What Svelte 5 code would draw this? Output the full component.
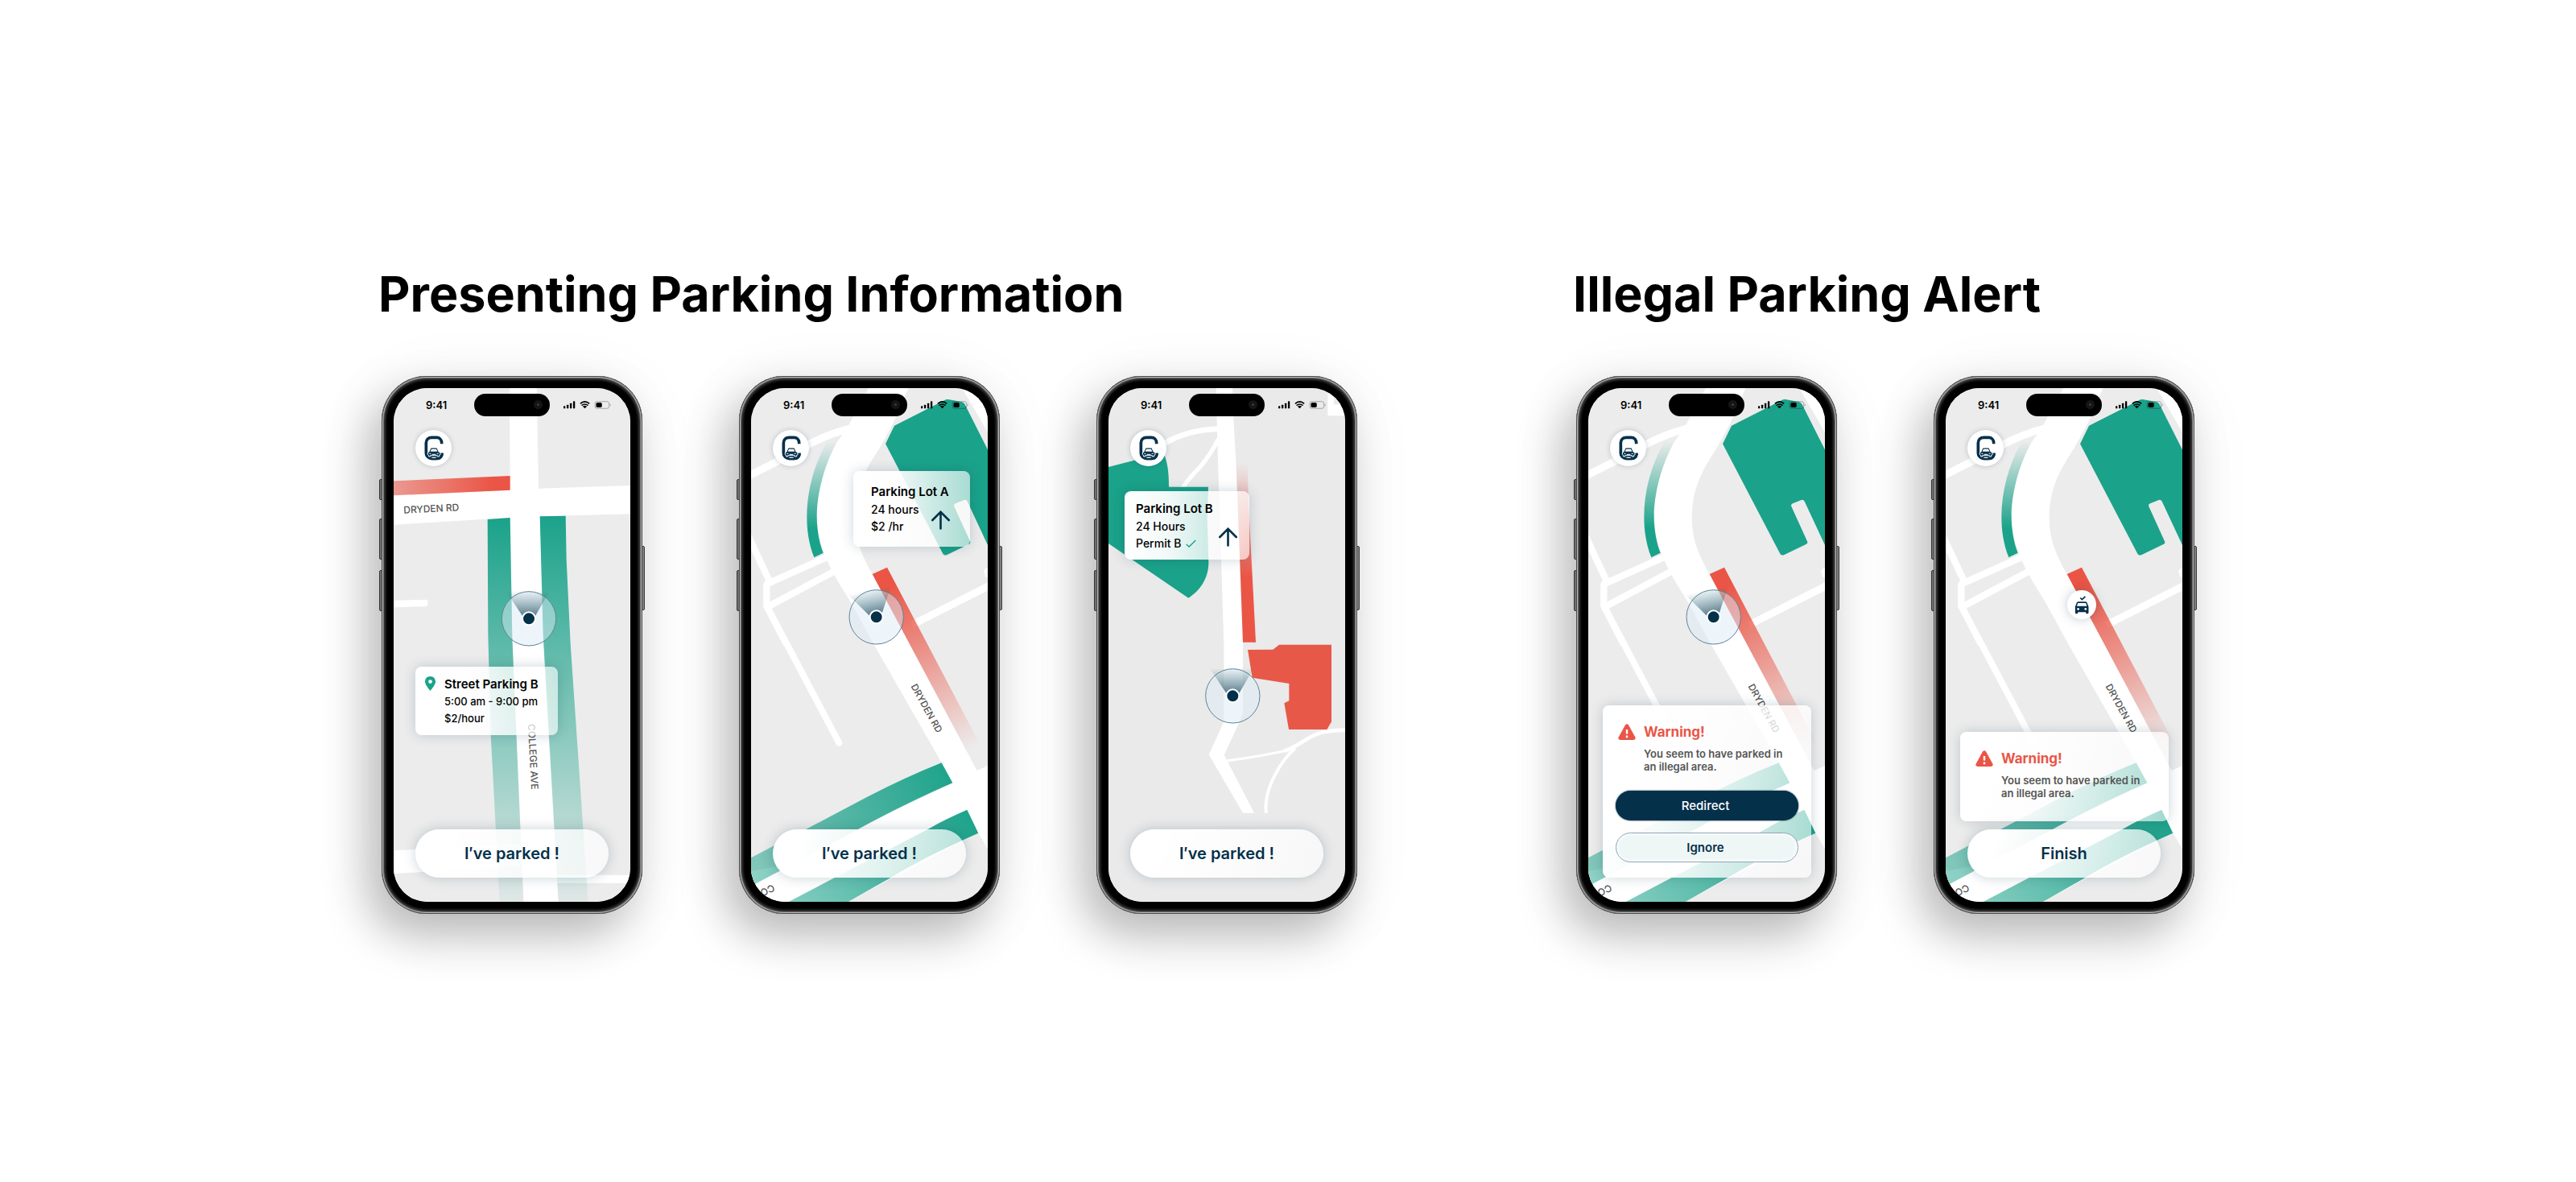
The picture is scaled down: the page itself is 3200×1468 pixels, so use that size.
<script>
  const groups = [
    {
      title: 'Presenting Parking Information',
      phones: [
        {
          map: 'college',
          marker: { x: 504, y: 859, turn: 0 },
          card: {
            kind: 'street',
            title: 'Street Parking B',
            lines: ['5:00 am - 9:00 pm', '$2/hour'],
            icon: 'pin'
          },
          action: 'I′ve parked !'
        },
        {
          map: 'dryden',
          marker: { x: 467, y: 853, turn: -12 },
          card: {
            kind: 'lot-a',
            title: 'Parking Lot A',
            lines: ['24 hours', '$2 /hr'],
            icon: 'arrow'
          },
          action: 'I′ve parked !'
        },
        {
          map: 'lot',
          marker: { x: 463, y: 1147, turn: 0 },
          card: {
            kind: 'lot-b',
            title: 'Parking Lot B',
            lines: ['24 Hours', 'Permit B'],
            icon: 'arrow',
            check: true
          },
          action: 'I′ve parked !'
        }
      ]
    },
    {
      title: 'Illegal Parking Alert',
      phones: [
        { map: 'dryden', marker: { x: 467, y: 853, turn: -12 }, warning: 'choices' },
        { map: 'dryden', parked: true, warning: 'note', action: 'Finish' }
      ]
    }
  ];
</script>

{#snippet logo()}
  <button class="logo" aria-label="Home">
    <svg viewBox="0 0 135 135" aria-hidden="true">
      <path
        d="M98 52V48C98 36 90 28 79 28H61C49 28 40 36 40 48V86C40 98 49 106 61 106H79C90 106 99 98 99 88V86"
        fill="none" stroke="#04304a" stroke-width="11" />
      <path d="M44 86H104V92Q102 110 82 112H60Q46 108 44 94Z" fill="#04304a" />
      <path
        d="M46 92V84L51 81L56 69Q57 66 60 66H78Q81 66 82 69L87 81L93 84V92L89 94V99H82V95H56V99H50V95Z"
        fill="#04304a" stroke="#fff" stroke-width="3" />
      <path d="M56 80L60 71H78L82 80Z" fill="#fff" />
      <path d="M52 88H58M80 88H86M62 91H76" stroke="#fff" stroke-width="3" />
      <path d="M58 101H80Q77 105 69 105Q61 105 58 101Z" fill="#fff" />
    </svg>
  </button>
{/snippet}

{#snippet statusBar()}
  <header class="status">
    <time>9:41</time>
    <span class="island"><i></i></span>
    <svg class="signals" viewBox="0 0 178 30" aria-hidden="true">
      <g fill="#000">
        <rect x="0" y="19" width="7" height="9" rx="2" />
        <rect x="12" y="14" width="7" height="14" rx="2" />
        <rect x="24" y="8" width="7" height="20" rx="2" />
        <rect x="36" y="1" width="7" height="27" rx="2" />
        <path d="M80 28L72 20Q80 14 88 20Z" />
      </g>
      <g fill="none" stroke="#000" stroke-width="5">
        <path d="M63 10Q80 -5 97 10" />
        <path d="M68 17Q80 7 92 17" />
      </g>
      <rect x="118" y="2" width="53" height="26" rx="8" fill="none" stroke="#000" stroke-opacity=".3" stroke-width="3" />
      <rect x="122" y="6" width="22" height="18" rx="5" fill="#000" />
      <path d="M174 10Q180 15 174 20Z" fill="#000" fill-opacity=".35" />
    </svg>
  </header>
{/snippet}

{#snippet position(marker)}
  <g transform="translate({marker.x} {marker.y})">
    <circle r="101" fill="#dcecf7" fill-opacity=".5" stroke="#5f8496" stroke-width="3" />
    <path d="M-24 -10L-86 -104H78L24 -10Z" fill="url(#cone)" transform="rotate({marker.turn})" />
    <circle r="24" fill="#04304a" stroke="#fff" stroke-width="6" />
  </g>
{/snippet}

{#snippet collegeMap()}
  <rect width="882" height="1914" fill="#ececec" />
  <path d="M0 1723L470 1697L475 1782L0 1809ZM590 1814H882V1844H600Z" fill="#fff" />
  <path d="M0 791L120 788Q127 788 127 795V808Q127 814 120 814L0 817Z" fill="#fff" />
  <path d="M432 0H533L540 374L882 363V469L545 478L560 923L614 1914H484L442 930L434 483L0 509V400L434 380Z" fill="#fff" />
  <path d="M0 346L434 327V380L0 400Z" fill="url(#red-west)" />
  <path d="M350 489L434 483L442 930L484 1914H395L362 1293L352 923Z" fill="url(#green-south)" />
  <path d="M545 478L641 476L644 640L659 953L725 1914H614L557 923Z" fill="url(#green-south)" />
  <text class="road" transform="translate(141 462) rotate(-3)">DRYDEN RD</text>
  <text class="road" transform="translate(507 1374) rotate(87)">COLLEGE AVE</text>
{/snippet}

{#snippet drydenMap()}
  <rect width="882" height="1914" fill="#ececec" />
  <g fill="none" stroke="#fff" stroke-width="25">
    <path d="M-10 328L90 277L215 210Q290 170 370 150" stroke-width="28" />
    <path d="M-10 552L66 714" />
    <path d="M300 622L58 730V812L132 955" stroke-linejoin="bevel" />
    <path d="M60 816L330 672" />
    <path d="M60 815L328 1322" stroke-linecap="round" stroke-width="24" />
    <path d="M600 882L900 730" stroke-width="27" />
  </g>
  <path d="M786 0H862L882 60V164Z" fill="#fff" />
  <path d="M882 668L870 676L868 684L874 704L882 706Z" fill="#fff" />
  <path
    d="M438 0H586L530 130L480 222C420 312 386 380 386 485C386 560 410 620 452 693L842 1425L882 1407V1716L847 1658L787 1686L362 1914H20L0 1880V1800L105 1780L751 1471L710 1396L455 950L370 795C325 720 245 610 245 475C245 400 270 290 318 205L360 145Z"
    fill="#fff" />
  <path d="M282 203Q318 190 320 203C270 290 245 400 245 475C245 530 255 580 269 614L235 631C215 580 208 530 208 480C208 390 232 290 282 203Z" fill="url(#green-north)" />
  <path
    d="M534 140L720 46Q729 40 739 43L786 52Q793 53 797 61L900 265V622L882 585L806 422Q802 415 794 417L762 430Q754 434 757 441L817 573Q818 578 813 581L729 622Q720 625 715 617L501 208Z"
    fill="#1ba28a" />
  <path d="M452 693L507 668L870 1360L820 1384Z" fill="url(#red-south)" />
  <path d="M710 1396Q570 1452 430 1525L210 1641L83 1706L-6 1753V1862L20 1845L105 1800L400 1643Q570 1550 751 1471Z" fill="url(#green-west)" />
  <path d="M805 1571Q720 1608 660 1643L310 1825L140 1914H362L522 1823Q650 1745 847 1658Z" fill="url(#green-west)" />
  <text class="road small" transform="translate(654 1193) rotate(61)" dy="12">DRYDEN RD</text>
  <text class="road start" transform="translate(80 1848) rotate(155)">CO</text>
{/snippet}

{#snippet lotMap()}
  <rect width="882" height="1914" fill="#eaeaea" />
  <path d="M817 0H882V103H817Z" fill="#fff" />
  <path d="M839 0H882V61H839Z" fill="#eaeaea" />
  <path d="M401 0H462L466 113L474 253L501 953V1210L490 1240L431 1367L543 1583H501L374 1366L430 1243V953L407 240Z" fill="#fff" />
  <g fill="none" stroke="#fff">
    <path d="M205 208Q290 156 415 151" stroke-width="20" />
    <path d="M276 372Q300 335 345 290Q378 250 410 190" stroke-width="16" />
    <path d="M438 1389Q580 1370 680 1346" stroke-width="9" />
    <path d="M655 1352C710 1335 740 1296 800 1282Q840 1274 882 1274" stroke-width="14" />
    <path d="M696 1342C640 1390 576 1500 588 1583" stroke-width="12" />
  </g>
  <path d="M0 294L96 269L205 240C218 270 226 310 225 368H372L368 480L373 650C373 710 340 755 298 782L0 579Z" fill="#1ba28a" />
  <path d="M475 250H517L522 430L549 947H501Z" fill="url(#red-north)" />
  <path d="M519 975L613 974L636 956H831V1243L814 1272H672L655 1174L673 1165V1101L536 1079Z" fill="#e85848" />
{/snippet}

{#snippet warningCopy()}
  <div class="alert-head">
    <svg class="triangle" viewBox="0 0 64 58" aria-hidden="true">
      <path d="M26 4Q32 -3 38 4L62 48Q66 57 56 58H8Q-2 57 2 48Z" fill="#ea5546" />
      <path d="M32 20V36M32 42V50" stroke="#fff" stroke-width="7" />
    </svg>
    <h2>Warning!</h2>
  </div>
  <p>You seem to have parked in<br />an illegal area.</p>
{/snippet}

<svg class="shared" aria-hidden="true">
  <defs>
    <linearGradient id="red-west" x1="0" x2="1" y1="0" y2="0">
      <stop offset="0" stop-color="#ea5546" stop-opacity=".55" />
      <stop offset=".85" stop-color="#ea5546" />
    </linearGradient>
    <linearGradient id="green-south" x1="0" x2="0" y1="0" y2="1">
      <stop offset="0" stop-color="#1ba28a" />
      <stop offset="1" stop-color="#1ba28a" stop-opacity=".06" />
    </linearGradient>
    <linearGradient id="green-north" x1="0" x2="0" y1="0" y2="1">
      <stop offset="0" stop-color="#1ba28a" stop-opacity="0" />
      <stop offset=".75" stop-color="#1ba28a" />
    </linearGradient>
    <linearGradient id="green-west" gradientUnits="userSpaceOnUse" x1="0" y1="1860" x2="800" y2="1500">
      <stop offset="0" stop-color="#1ba28a" stop-opacity=".48" />
      <stop offset="1" stop-color="#1ba28a" />
    </linearGradient>
    <linearGradient id="red-south" gradientUnits="userSpaceOnUse" x1="500" y1="740" x2="830" y2="1340">
      <stop offset="0" stop-color="#ea5546" />
      <stop offset="1" stop-color="#ea5546" stop-opacity="0" />
    </linearGradient>
    <linearGradient id="red-north" x1="0" x2="0" y1="0" y2="1">
      <stop offset=".04" stop-color="#ea5546" stop-opacity="0" />
      <stop offset=".65" stop-color="#ea5546" />
    </linearGradient>
    <linearGradient id="cone" x1="0" x2="0" y1="1" y2="0">
      <stop offset="0" stop-color="#04304a" stop-opacity=".62" />
      <stop offset="1" stop-color="#1b5a58" stop-opacity="0" />
    </linearGradient>
  </defs>
</svg>

<main>
  {#each groups as group}
    <section>
      <h1>{group.title}</h1>
      <div class="phones">
        {#each group.phones as phone}
          <article class="phone">
            <span class="key silent"></span>
            <span class="key up"></span>
            <span class="key down"></span>
            <span class="key power"></span>
            <div class="screen">
              <svg class="map" viewBox="0 0 882 1914" preserveAspectRatio="none" aria-hidden="true">
                {#if phone.map === 'college'}
                  {@render collegeMap()}
                {:else if phone.map === 'dryden'}
                  {@render drydenMap()}
                {:else}
                  {@render lotMap()}
                {/if}
                {#if phone.marker}
                  {@render position(phone.marker)}
                {/if}
              </svg>

              {@render statusBar()}
              {@render logo()}

              {#if phone.parked}
                <span class="car-pin">
                  <svg viewBox="0 0 106 106" aria-hidden="true">
                    <path d="M48 28L54 34L66 23" fill="none" stroke="#04304a" stroke-width="5" />
                    <path
                      d="M29 82V60L35 45Q37 42 41 42H66Q70 42 72 45L78 60V82Q78 86 74 86H71Q68 86 68 82V80H39V82Q39 86 36 86H32Q29 86 29 82Z"
                      fill="#04304a" />
                    <path d="M35 58L39 47H68L72 58Z" fill="#fff" />
                    <circle cx="40" cy="69" r="4" fill="#fff" />
                    <circle cx="67" cy="69" r="4" fill="#fff" />
                  </svg>
                </span>
              {/if}

              {#if phone.card}
                <div class="card {phone.card.kind}">
                  {#if phone.card.icon === 'pin'}
                    <svg class="place" viewBox="0 0 38 52" aria-hidden="true">
                      <path d="M19 0C8 0 0 8 0 19C0 32 19 52 19 52C19 52 38 32 38 19C38 8 30 0 19 0ZM19 26A7 7 0 1 1 19 12A7 7 0 0 1 19 26Z" fill="#1ba28a" />
                    </svg>
                  {/if}
                  <div class="facts">
                    <h2>{phone.card.title}</h2>
                    {#each phone.card.lines as line, i}
                      <p>
                        {line}
                        {#if phone.card.check && i === 1}
                          <svg class="tick" viewBox="0 0 38 28" aria-hidden="true">
                            <path d="M2 17L12 26L36 2" fill="none" stroke="#1ba28a" stroke-width="4" />
                          </svg>
                        {/if}
                      </p>
                    {/each}
                  </div>
                  {#if phone.card.icon === 'arrow'}
                    <svg class="arrow" viewBox="0 0 70 72" aria-hidden="true">
                      <path d="M35 68V5M4 36L35 5L66 36" fill="none" stroke="#04304a" stroke-width="8" stroke-linecap="round" />
                    </svg>
                  {/if}
                </div>
              {/if}

              <footer>
                {#if phone.warning}
                  <div class="sheet" role="alert">
                    {@render warningCopy()}
                    {#if phone.warning === 'choices'}
                      <div class="choices">
                        <button class="primary">Redirect</button>
                        <button class="secondary">Ignore</button>
                      </div>
                    {/if}
                  </div>
                {/if}
                {#if phone.action}
                  <button class="action">{phone.action}</button>
                {/if}
              </footer>
            </div>
          </article>
        {/each}
      </div>
    </section>
  {/each}
</main>

<style>
  :global(body) {
    margin: 0;
    background: #fff;
    font-family: Inter, 'Liberation Sans', sans-serif;
  }

  .shared {
    position: absolute;
    width: 0;
    height: 0;
  }

  main {
    box-sizing: border-box;
    display: flex;
    flex-wrap: wrap;
    align-content: center;
    justify-content: center;
    gap: 96px 272px;
    min-height: 100vh;
    padding: 47px 48px 49px;
  }

  section {
    display: flex;
    flex-direction: column;
    gap: 69px;
  }

  h1,
  h2,
  p {
    margin: 0;
  }

  h1 {
    margin-left: -4px;
    font-size: 61px;
    line-height: 66px;
    font-weight: 700;
    color: #000;
    white-space: nowrap;
  }

  .phones {
    display: flex;
    flex-wrap: wrap;
    gap: 120px;
  }

  .phone {
    position: relative;
    box-sizing: border-box;
    width: 324px;
    padding: 15px;
    border-radius: 56px;
    background: #000;
    box-shadow:
      inset 0 0 0 1px #4a4a4a,
      inset 0 0 0 2px #b4b4b4,
      inset 0 0 0 3px #6a6a6a,
      inset 0 0 3px 5px #3a3a3a,
      -16px 26px 56px rgba(0, 0, 0, 0.26),
      -4px 10px 90px rgba(0, 0, 0, 0.06);
  }

  .key {
    position: absolute;
    left: -3px;
    z-index: -1;
    box-sizing: border-box;
    width: 6px;
    border: 1px solid #444;
    border-radius: 2px;
    background: #8c8c8c;
  }

  .silent {
    top: 128px;
    height: 26px;
  }

  .up {
    top: 177px;
    height: 51px;
  }

  .down {
    top: 241px;
    height: 51px;
  }

  .power {
    top: 211px;
    left: auto;
    right: -3px;
    height: 80px;
  }

  .screen {
    position: relative;
    display: flex;
    flex-direction: column;
    min-height: 638px;
    border-radius: 42px;
    overflow: hidden;
    background: #ececec;
  }

  .map {
    position: absolute;
    inset: 0;
    width: 100%;
    height: 100%;
  }

  .road {
    font-size: 36px;
    font-weight: 500;
    fill: #555;
    text-anchor: middle;
  }

  .road.small {
    font-size: 35px;
  }

  .road.start {
    text-anchor: start;
  }

  .status {
    position: relative;
    display: grid;
    grid-template-columns: 1fr 94px 1fr;
    align-items: center;
    height: 28px;
    margin-top: 7px;
  }

  time {
    padding-left: 40px;
    font-size: 13px;
    line-height: 28px;
    font-weight: 600;
  }

  .island {
    display: flex;
    align-items: center;
    justify-content: flex-end;
    box-sizing: border-box;
    height: 28px;
    padding-right: 9px;
    border-radius: 14px;
    background: #000;
  }

  .island i {
    width: 3px;
    height: 3px;
    border: 4px solid #151515;
    border-radius: 50%;
    background: #3c3c3c;
  }

  .signals {
    width: 59px;
    height: 10px;
    margin-left: 17px;
  }

  button {
    font-family: inherit;
    padding: 0;
    border: 0;
    cursor: pointer;
  }

  .logo {
    position: relative;
    width: 45px;
    height: 45px;
    margin: 17px 0 0 27px;
    border-radius: 50%;
    background: #fff;
    box-shadow: 0 0 6px rgba(4, 48, 74, 0.22);
  }

  .logo svg,
  .car-pin svg {
    display: block;
    width: 100%;
    height: 100%;
  }

  .car-pin {
    position: absolute;
    top: 251px;
    left: 151px;
    width: 36px;
    height: 36px;
    border-radius: 50%;
    background: #fff;
    box-shadow: 0 0 14px rgba(4, 48, 74, 0.25);
  }

  .card {
    position: absolute;
    box-sizing: border-box;
    display: flex;
    align-items: flex-start;
    border-radius: 8px;
    background: linear-gradient(90deg, #fff, rgba(255, 255, 255, 0.94) 35%, rgba(255, 255, 255, 0.62));
    box-shadow: 0 0 16px rgba(4, 48, 74, 0.2);
    color: #000;
    white-space: nowrap;
  }

  .street {
    top: 346px;
    left: 27px;
    width: 177px;
    height: 85px;
    padding: 11px 12px;
    gap: 11px;
  }

  .lot-a {
    top: 103px;
    left: 127px;
    width: 145px;
    height: 94px;
    padding: 15px 25px 0 22px;
    justify-content: space-between;
  }

  .lot-b {
    top: 128px;
    left: 20px;
    width: 155px;
    height: 85px;
    padding: 11px 15px 0 14px;
    justify-content: space-between;
  }

  .facts {
    width: 0;
    flex: 1;
  }

  .facts h2 {
    font-size: 15px;
    line-height: 22px;
    font-weight: 600;
  }

  .facts p {
    font-size: 14px;
    line-height: 21px;
    font-weight: 500;
  }

  .street .facts p {
    font-size: 13px;
  }

  .place {
    width: 13px;
    height: 18px;
    margin-top: 1px;
  }

  .arrow {
    width: 23px;
    height: 24px;
    margin-top: 34px;
  }

  .tick {
    width: 13px;
    height: 10px;
    margin-left: 2px;
  }

  footer {
    position: relative;
    display: flex;
    flex-direction: column;
    gap: 10px;
    margin-top: auto;
    padding: 0 17px 30px 18px;
  }

  .action {
    width: 240px;
    height: 60px;
    margin-left: 9px;
    border-radius: 30px;
    background: linear-gradient(110deg, #fff 15%, rgba(255, 255, 255, 0.9) 40%, rgba(255, 255, 255, 0.64));
    box-shadow: 0 0 16px rgba(4, 48, 74, 0.22);
    color: #04304a;
    font-size: 20px;
    line-height: 24px;
    font-weight: 600;
  }

  .sheet {
    padding: 22px 16px 27px;
    border-radius: 8px;
    background: linear-gradient(110deg, #fff 15%, rgba(255, 255, 255, 0.92) 40%, rgba(255, 255, 255, 0.58));
    box-shadow: 0 0 16px rgba(4, 48, 74, 0.2);
  }

  .alert-head {
    display: flex;
    align-items: center;
    gap: 10px;
    padding-left: 3px;
  }

  .triangle {
    width: 22px;
    height: 20px;
  }

  .sheet h2 {
    color: #ea5546;
    font-size: 17px;
    line-height: 22px;
    font-weight: 700;
  }

  .sheet p {
    margin-top: 8px;
    padding-left: 35px;
    color: #555;
    font-size: 13px;
    line-height: 16px;
    font-weight: 600;
    white-space: nowrap;
  }

  .choices {
    display: flex;
    flex-direction: column;
    gap: 15px;
    padding-top: 22px;
    margin-bottom: -8px;
  }

  .choices button {
    height: 37px;
    padding-right: 4px;
    border-radius: 19px;
    font-size: 15px;
    font-weight: 500;
  }

  .primary {
    background: #04304a;
    color: #fff;
    box-shadow: 0 0 2px #04304a;
  }

  .choices .secondary {
    border: 1px solid #8fa6b5;
    background: #eef6f6;
    box-shadow: inset 0 0 4px 1px #fff;
    color: #04304a;
    font-weight: 600;
  }
</style>
